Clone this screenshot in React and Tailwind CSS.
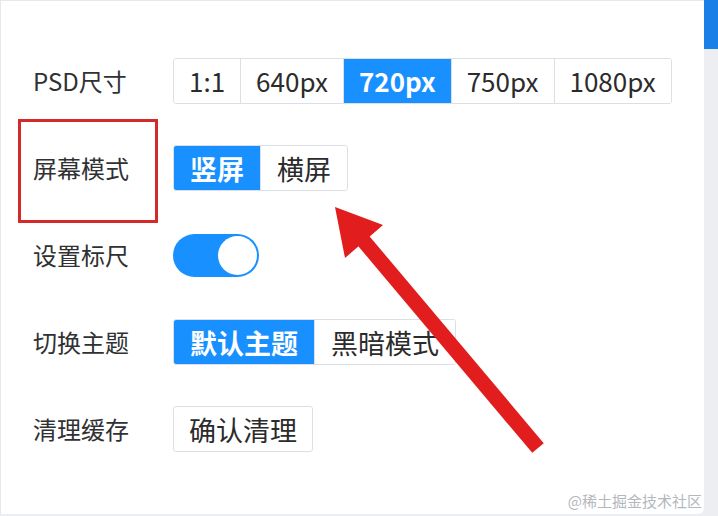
import { useState } from 'react';

const SIZES = ['1:1', '640px', '720px', '750px', '1080px'];

function Segmented({ items, value, onChange, textClass }) {
  return (
    <div className="flex h-[46px] rounded-[3px] border border-[#dcdfe6] overflow-hidden">
      {items.map((item, i) => {
        const active = item === value;
        return (
          <button
            key={item}
            onClick={() => onChange(item)}
            className={
              'h-full leading-none ' +
              textClass +
              (i > 0 ? ' border-l border-[#dcdfe6]' : '') +
              (active ? ' bg-[#1890ff] text-white font-bold border-[#1890ff]' : ' bg-white text-[#2b2b2b]')
            }
          >
            {item}
          </button>
        );
      })}
    </div>
  );
}

function Row({ label, children }) {
  return (
    <div className="flex items-center h-[46px]">
      <div className="w-[140px] text-[24px] text-[#303133] leading-none">{label}</div>
      {children}
    </div>
  );
}

export default function App() {
  const [size, setSize] = useState('720px');
  const [screen, setScreen] = useState('竖屏');
  const [ruler, setRuler] = useState(true);
  const [theme, setTheme] = useState('默认主题');

  return (
    <div className="w-[718px] h-[516px] flex bg-[#eceef2] font-['Noto_Sans_CJK_SC',sans-serif] overflow-hidden">
      <div className="relative w-[704px] h-[514px] bg-white border-l border-t border-[#e6e8ec] rounded-br-[6px]">
        <div className="flex flex-col gap-[41px] pt-[57px] pl-[32px]">
          <Row label="PSD尺寸">
            <Segmented items={SIZES} value={size} onChange={setSize} textClass="text-[26px] px-[15px]" />
          </Row>
          <Row label="屏幕模式">
            <Segmented items={['竖屏', '横屏']} value={screen} onChange={setScreen} textClass="text-[27px] px-[16px]" />
          </Row>
          <Row label="设置标尺">
            <button
              onClick={() => setRuler(!ruler)}
              className={
                'w-[86px] h-[43px] rounded-full p-[2px] flex ' +
                (ruler ? 'bg-[#1890ff] justify-end' : 'bg-[#dcdfe6] justify-start')
              }
            >
              <span className="w-[39px] h-[39px] rounded-full bg-white" />
            </button>
          </Row>
          <Row label="切换主题">
            <Segmented items={['默认主题', '黑暗模式']} value={theme} onChange={setTheme} textClass="text-[27px] px-[16px]" />
          </Row>
          <Row label="清理缓存">
            <button className="h-[46px] px-[15px] rounded-[3px] border border-[#dcdfe6] bg-white text-[27px] text-[#2b2b2b] leading-none">
              确认清理
            </button>
          </Row>
        </div>

        {/* annotation overlay */}
        <div className="absolute left-[17px] top-[118px] w-[140px] h-[104px] border-[3px] border-[#d42a2a]" />
        <svg className="absolute left-0 top-0 pointer-events-none" width="704" height="514" viewBox="-1 -1 704 514">
          <line x1="360" y1="237" x2="536" y2="446" stroke="#e21d1d" strokeWidth="15" />
          <polygon points="333,205 381,223 343,256" fill="#e21d1d" />
        </svg>
        <div className="absolute right-[2px] bottom-[6px] text-[15px] text-[#b4b7bc] leading-none">@稀土掘金技术社区</div>
      </div>
      <div className="w-[14px] flex flex-col">
        <div className="h-[49px] bg-[#1a7fe6]" />
      </div>
    </div>
  );
}
